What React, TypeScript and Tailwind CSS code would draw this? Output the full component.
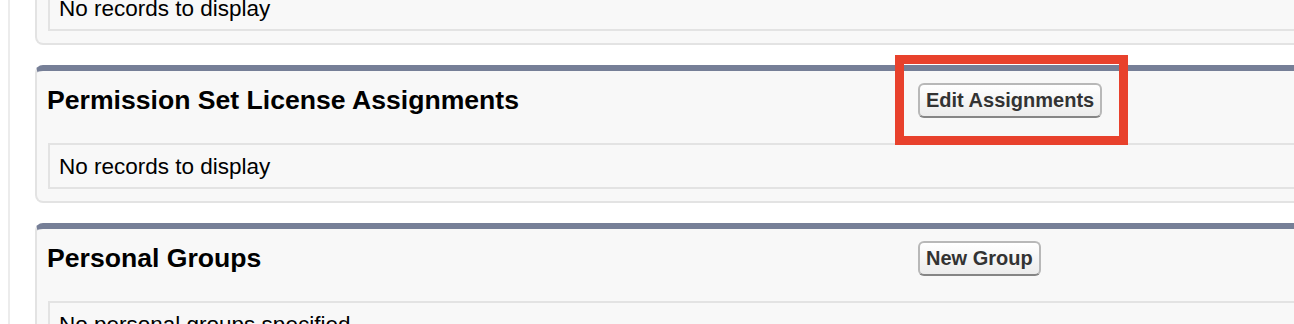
import React from "react";

interface PanelProps {
  title?: string;
  action?: string;
  empty: string;
  highlight?: boolean;
  partial?: boolean;
}

const Panel: React.FC<PanelProps> = ({ title, action, empty, highlight, partial }) => {
  return (
    <div
      className={`w-[1300px] shrink-0 bg-[#f8f8f8] border-2 border-[#e3e3e3] ${
        partial ? "border-t-0 rounded-b-[8px]" : "border-t-[6px] border-t-[#767f97] rounded-[8px]"
      }`}
    >
      {!partial && (
        <div className="h-[58px] mb-[14px] flex items-center">
          <div className="w-[881px] pl-[10px]">
            <h2 className="text-[26.6px] font-bold text-black leading-none">{title}</h2>
          </div>
          {action && (
            <div className="relative">
              <button className="h-[35px] px-[6px] rounded-[6px] border-2 border-[#b8b8b8] border-b-[#858585] bg-gradient-to-b from-white to-[#ececec] text-[20px] font-bold text-[#333] leading-none">
                {action}
              </button>
              {highlight && (
                <div className="absolute left-[-23px] top-[-28px] w-[233px] h-[90px] border-[9px] border-[#e8412c] pointer-events-none" />
              )}
            </div>
          )}
        </div>
      )}
      <div className="px-[11px] pb-[12px]">
        <div className="h-[46px] border-2 border-[#e3e3e3] flex items-center pl-[9px] pt-[2px]">
          <span className="text-[22.5px] text-black">{empty}</span>
        </div>
      </div>
    </div>
  );
};

const App: React.FC = () => {
  return (
    <div
      className="w-[1294px] h-[324px] overflow-hidden bg-white flex"
      style={{ fontFamily: '"Liberation Sans", Arial, sans-serif' }}
    >
      <div className="w-[8px] shrink-0" />
      <div className="w-[2px] shrink-0 bg-[#ececec]" />
      <div className="w-[25px] shrink-0" />
      <div className="flex flex-col gap-[20px] -mt-[15px]">
        <Panel partial empty="No records to display" />
        <Panel
          title="Permission Set License Assignments"
          action="Edit Assignments"
          empty="No records to display"
          highlight
        />
        <Panel title="Personal Groups" action="New Group" empty="No personal groups specified" />
      </div>
    </div>
  );
};

export default App;
